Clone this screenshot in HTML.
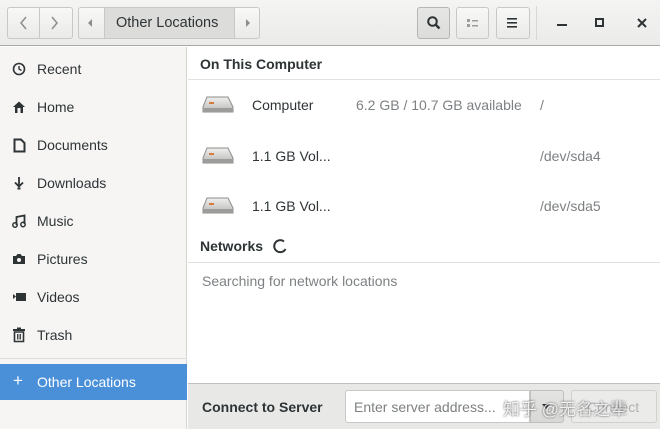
<!DOCTYPE html>
<html><head><meta charset="utf-8"><style>
*{box-sizing:border-box;margin:0;padding:0}
body{width:660px;height:429px;overflow:hidden;font-family:"Liberation Sans","Noto Sans CJK SC",sans-serif;font-size:14px;color:#2e3436;background:#fff;position:relative}
.abs{position:absolute}
.hdr{left:0;top:0;width:660px;height:46px;background:linear-gradient(#f4f4f3,#ebebea);border-bottom:1px solid #a9a9a6}
.btn{position:absolute;border:1px solid #c8c8c5;border-radius:3px;background:linear-gradient(#f8f8f7,#eaeae8);height:32px;top:7px}
.btnd{background:linear-gradient(#e6e6e4,#dcdcda);border-color:#b6b6b3}
.side{left:0;top:47px;width:187px;height:336px;background:#f6f5f4;border-right:1px solid #d5d5d2}
.item{position:absolute;left:37px;font-size:14px}
.txt{position:absolute;font-size:14px}
.gray{color:#7d8183}
</style></head><body>
<div class="abs hdr"></div>
<div class="btn" style="left:7px;width:66px"></div>
<div class="abs" style="left:39px;top:8px;width:1px;height:30px;background:#c8c8c5"></div>
<svg class="abs" style="left:18px;top:15px" width="12" height="16"><path d="M8 2 L3 8 L8 14" stroke="#8b8e8f" stroke-width="1.5" fill="none"/></svg>
<svg class="abs" style="left:49px;top:15px" width="12" height="16"><path d="M3 2 L8 8 L3 14" stroke="#8b8e8f" stroke-width="1.5" fill="none"/></svg>
<div class="btn" style="left:78px;width:182px"></div>
<div class="abs" style="left:104px;top:8px;width:131px;height:30px;background:#dcdcda;border-left:1px solid #c8c8c5;border-right:1px solid #c8c8c5"></div>
<svg class="abs" style="left:86px;top:18px" width="8" height="10"><path d="M6 1 L2 5 L6 9Z" fill="#8b8e8f"/></svg>
<svg class="abs" style="left:244px;top:18px" width="8" height="10"><path d="M2 1 L6 5 L2 9Z" fill="#8b8e8f"/></svg>
<div class="txt" style="left:116px;top:15px;color:#2e3436;font-size:14.5px">Other Locations</div>
<div class="btn btnd" style="left:417px;width:33px"></div>
<svg class="abs" style="left:426px;top:15px" width="16" height="16"><circle cx="6.5" cy="6.5" r="4.3" stroke="#2e3436" stroke-width="2" fill="none"/><path d="M9.5 9.5 L13.5 13.5" stroke="#2e3436" stroke-width="2.4"/></svg>
<div class="btn" style="left:456px;width:33px"></div>
<svg class="abs" style="left:465px;top:16px" width="16" height="14"><rect x="2" y="3" width="3" height="3" fill="#9a9d9e"/><rect x="2" y="8" width="3" height="3" fill="#9a9d9e"/><rect x="7" y="4" width="6" height="1.5" fill="#9a9d9e"/><rect x="7" y="9" width="6" height="1.5" fill="#9a9d9e"/></svg>
<div class="btn" style="left:496px;width:34px"></div>
<svg class="abs" style="left:506px;top:16px" width="14" height="14"><rect x="1" y="2" width="10" height="1.6" fill="#2e3436"/><rect x="1" y="6" width="10" height="1.6" fill="#2e3436"/><rect x="1" y="10" width="10" height="1.6" fill="#2e3436"/></svg>
<div class="abs" style="left:536px;top:6px;width:1px;height:34px;background:#d8d8d5"></div>
<div class="abs" style="left:557px;top:24px;width:10px;height:2px;background:#2e3436"></div>
<div class="abs" style="left:595px;top:18px;width:9px;height:9px;border:2px solid #2e3436"></div>
<svg class="abs" style="left:636px;top:17px" width="12" height="12"><path d="M2 2 L10 10 M10 2 L2 10" stroke="#2e3436" stroke-width="2"/></svg>

<div class="abs side"></div>
<svg class="abs" style="left:12px;top:62px" width="14" height="14"><circle cx="7" cy="7" r="5.5" stroke="#2e3436" stroke-width="1.6" fill="none"/><path d="M7 4 V7 L9.5 8.5" stroke="#2e3436" stroke-width="1.4" fill="none"/></svg>
<div class="item" style="top:61px">Recent</div>
<svg class="abs" style="left:12px;top:100px" width="14" height="14"><path d="M1 7 L7 1.5 L13 7 H11 V13 H3 V7Z" fill="#2e3436"/><rect x="5.5" y="8" width="3" height="5" fill="#f6f5f4"/></svg>
<div class="item" style="top:99px">Home</div>
<svg class="abs" style="left:13px;top:138px" width="14" height="15"><path d="M1.5 1.5 H8 L11.5 5 V13.5 H1.5Z" stroke="#2e3436" stroke-width="2" fill="none"/></svg>
<div class="item" style="top:137px">Documents</div>
<svg class="abs" style="left:12px;top:176px" width="14" height="14"><path d="M7 1 V10 M3 6.5 L7 10.5 L11 6.5" stroke="#2e3436" stroke-width="1.8" fill="none"/><rect x="5.5" y="11.5" width="3" height="2" fill="#2e3436"/></svg>
<div class="item" style="top:175px">Downloads</div>
<svg class="abs" style="left:12px;top:214px" width="14" height="14"><path d="M4.5 11 V3 L12.5 1.5 V10" stroke="#2e3436" stroke-width="1.8" fill="none"/><circle cx="3" cy="11" r="2.2" stroke="#2e3436" stroke-width="1.5" fill="none"/><circle cx="11" cy="10.5" r="2.2" stroke="#2e3436" stroke-width="1.5" fill="none"/></svg>
<div class="item" style="top:213px">Music</div>
<svg class="abs" style="left:12px;top:252px" width="14" height="14"><path d="M1 4 H4 L5.5 2 H8.5 L10 4 H13 V12 H1Z" fill="#2e3436"/><circle cx="7" cy="8" r="2" fill="#f6f5f4"/></svg>
<div class="item" style="top:251px">Pictures</div>
<svg class="abs" style="left:12px;top:291px" width="15" height="12"><path d="M1 3 L4 5.5 L1 8Z" fill="#2e3436"/><rect x="4" y="2" width="10" height="8" fill="#2e3436"/></svg>
<div class="item" style="top:289px">Videos</div>
<svg class="abs" style="left:12px;top:327px" width="14" height="16"><rect x="1" y="2" width="12" height="2" fill="#2e3436"/><rect x="5" y="0.5" width="4" height="2" fill="#2e3436"/><path d="M2.5 5 H11.5 V14.5 H2.5Z" stroke="#2e3436" stroke-width="1.6" fill="none"/><path d="M5.5 7 V12.5 M7 7 V12.5 M8.5 7 V12.5" stroke="#2e3436" stroke-width="0.9"/></svg>
<div class="item" style="top:327px">Trash</div>
<div class="abs" style="left:0;top:358px;width:187px;height:1px;background:#dcdcda"></div>
<div class="abs" style="left:0;top:364px;width:187px;height:36px;background:#4a90d9"></div>
<div class="abs" style="left:13px;top:371px;color:#fff;font-size:17px">+</div>
<div class="item" style="top:374px;color:#fff">Other Locations</div>
<div class="abs" style="left:0;top:400px;width:187px;height:29px;background:#f6f5f4;border-right:1px solid #d5d5d2"></div>

<div class="txt" style="left:200px;top:56px;font-weight:bold">On This Computer</div>
<div class="abs" style="left:188px;top:79px;width:472px;height:1px;background:#e2e2e0"></div>
<svg class="abs" style="left:202px;top:95px" width="32" height="20"><defs><linearGradient id="g" x1="0" y1="0" x2="0" y2="1"><stop offset="0" stop-color="#f0f0ef"/><stop offset="1" stop-color="#b8b8b6"/></linearGradient></defs><path d="M5 2 H26 L31 12 V17 H1 V12Z" fill="url(#g)" stroke="#8c8c8a"/><rect x="1" y="13" width="30" height="4" fill="#9c9c9a"/><rect x="7" y="7" width="5" height="2" fill="#d87a3a"/></svg>
<div class="txt" style="left:252px;top:97px">Computer</div>
<div class="txt gray" style="left:356px;top:97px">6.2 GB / 10.7 GB available</div>
<div class="txt gray" style="left:540px;top:97px">/</div>
<svg class="abs" style="left:202px;top:146px" width="32" height="20"><path d="M5 2 H26 L31 12 V17 H1 V12Z" fill="url(#g)" stroke="#8c8c8a"/><rect x="1" y="13" width="30" height="4" fill="#9c9c9a"/><rect x="7" y="7" width="5" height="2" fill="#d87a3a"/></svg>
<div class="txt" style="left:252px;top:148px">1.1 GB Vol...</div>
<div class="txt gray" style="left:540px;top:148px">/dev/sda4</div>
<svg class="abs" style="left:202px;top:196px" width="32" height="20"><path d="M5 2 H26 L31 12 V17 H1 V12Z" fill="url(#g)" stroke="#8c8c8a"/><rect x="1" y="13" width="30" height="4" fill="#9c9c9a"/><rect x="7" y="7" width="5" height="2" fill="#d87a3a"/></svg>
<div class="txt" style="left:252px;top:198px">1.1 GB Vol...</div>
<div class="txt gray" style="left:540px;top:198px">/dev/sda5</div>
<div class="txt" style="left:200px;top:238px;font-weight:bold">Networks</div>
<svg class="abs" style="left:272px;top:238px" width="16" height="16"><path d="M12 3.5 A6 6 0 1 0 13.5 11" stroke="#2e3436" stroke-width="2" fill="none"/></svg>
<div class="abs" style="left:188px;top:262px;width:472px;height:1px;background:#e2e2e0"></div>
<div class="txt gray" style="left:202px;top:273px">Searching for network locations</div>

<div class="abs" style="left:188px;top:383px;width:472px;height:46px;background:#e8e8e7;border-top:1px solid #c0c0bd"></div>
<div class="txt" style="left:202px;top:399px;font-weight:bold">Connect to Server</div>
<div class="abs" style="left:345px;top:390px;width:185px;height:33px;background:#fff;border:1px solid #c8c8c5;border-radius:3px 0 0 3px"></div>
<div class="txt gray" style="left:354px;top:399px">Enter server address...</div>
<div class="abs" style="left:530px;top:390px;width:34px;height:33px;background:linear-gradient(#e4e4e2,#d8d8d6);border:1px solid #c0c0bd;border-radius:0 3px 3px 0"></div>
<svg class="abs" style="left:541px;top:403px" width="10" height="8"><path d="M1 1 H9 L5 6Z" fill="#2e3436"/></svg>
<div class="abs" style="left:571px;top:390px;width:86px;height:33px;border:1px solid #d0d0cd;border-radius:3px;background:#ebebea"></div>
<div class="txt" style="left:587px;top:399px;color:#b0b2b3">Connect</div>
<div class="txt" style="left:503px;top:395px;color:rgba(255,255,255,.85);font-size:17px;text-shadow:0 0 2px #444">知乎 @无名之辈</div>
</body></html>
